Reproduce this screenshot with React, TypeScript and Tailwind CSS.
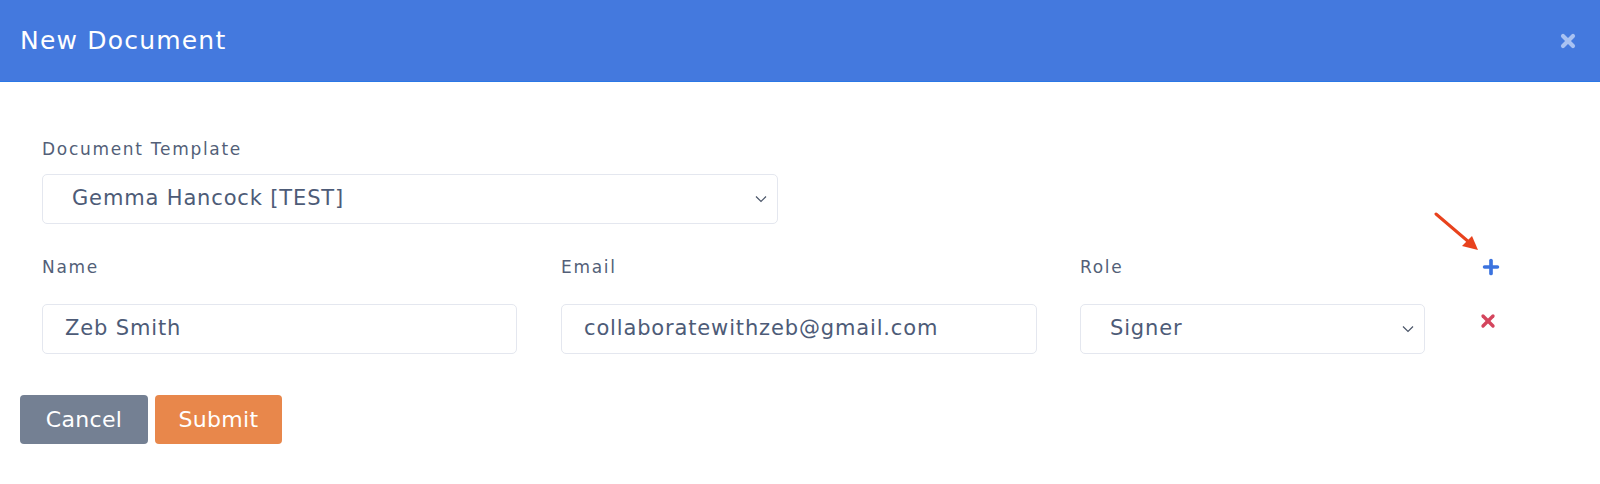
import { Plus, X } from "lucide-react"

const font = { fontFamily: '"DejaVu Sans", "Noto Sans", sans-serif' }

function Chevron() {
  return (
    <svg width="12" height="8" viewBox="0 0 12 8" className="shrink-0">
      <path d="M1 1.5 L6 6.5 L11 1.5" fill="none" stroke="#4a5568" strokeWidth="1.2" />
    </svg>
  )
}

function Field({ value, select }: { value: string; select?: boolean }) {
  return (
    <div
      className={
        select
          ? "flex h-[50px] items-center justify-between rounded-[5px] border border-[#e4e7ef] bg-white pl-[29px] pr-[10px] text-[21px] tracking-[0.85px] text-[#4d5b77]"
          : "flex h-[50px] items-center justify-between rounded-[5px] border border-[#e4e7ef] bg-white pl-[22px] pr-[10px] text-[21px] tracking-[0.85px] text-[#4d5b77]"
      }
    >
      <span>{value}</span>
      {select && <Chevron />}
    </div>
  )
}

function Label({ children }: { children: string }) {
  return <div className="h-6 text-[17px] leading-6 tracking-[1.7px] text-[#535f78]">{children}</div>
}

export default function App() {
  return (
    <div className="min-h-[484px] w-[1600px] bg-white" style={font}>
      <div className="flex h-[82px] items-center justify-between border-b border-[#2a78e6] bg-[#4479de] pl-5 pr-[22px]">
        <h1 className="text-[25px] tracking-[1.2px] text-white">New Document</h1>
        <X className="h-[20px] w-[20px] text-[#a9c2f2]" strokeWidth={5} />
      </div>

      <div className="relative px-[42px] pt-[55px]">
        <Label>Document Template</Label>
        <div className="mt-[13px] w-[736px]">
          <Field value="Gemma Hancock [TEST]" select />
        </div>

        <div className="mt-[31px] flex items-start">
          <div className="w-[475px]">
            <Label>Name</Label>
            <div className="mt-[25px]">
              <Field value="Zeb Smith" />
            </div>
          </div>
          <div className="ml-[44px] w-[476px]">
            <Label>Email</Label>
            <div className="mt-[25px]">
              <Field value="collaboratewithzeb@gmail.com" />
            </div>
          </div>
          <div className="ml-[43px] w-[345px]">
            <Label>Role</Label>
            <div className="mt-[25px]">
              <Field value="Signer" select />
            </div>
          </div>
          <div className="ml-[53px] flex flex-col items-center">
            <Plus className="mt-[1px] h-[22px] w-[22px] text-[#3b73df]" strokeWidth={4} />
            <X className="mr-[6px] mt-[33px] h-[20px] w-[20px] text-[#d4455d]" strokeWidth={4} />
          </div>
        </div>

        <svg className="absolute left-[1434px] top-[130px]" width="50" height="42" viewBox="0 0 50 42">
          <line x1="2" y1="2" x2="36" y2="31" stroke="#e8421d" strokeWidth="3" strokeLinecap="round" />
          <polygon points="44,38 28,34 38,24" fill="#e8421d" />
        </svg>
      </div>

      <div className="mt-[41px] flex gap-[7px] px-5">
        <button className="h-[49px] w-[128px] rounded-[4px] bg-[#748093] text-[22px] tracking-[0.3px] text-white">Cancel</button>
        <button className="h-[49px] w-[127px] rounded-[4px] bg-[#e8874b] text-[22px] tracking-[0.3px] text-white">Submit</button>
      </div>
    </div>
  )
}
